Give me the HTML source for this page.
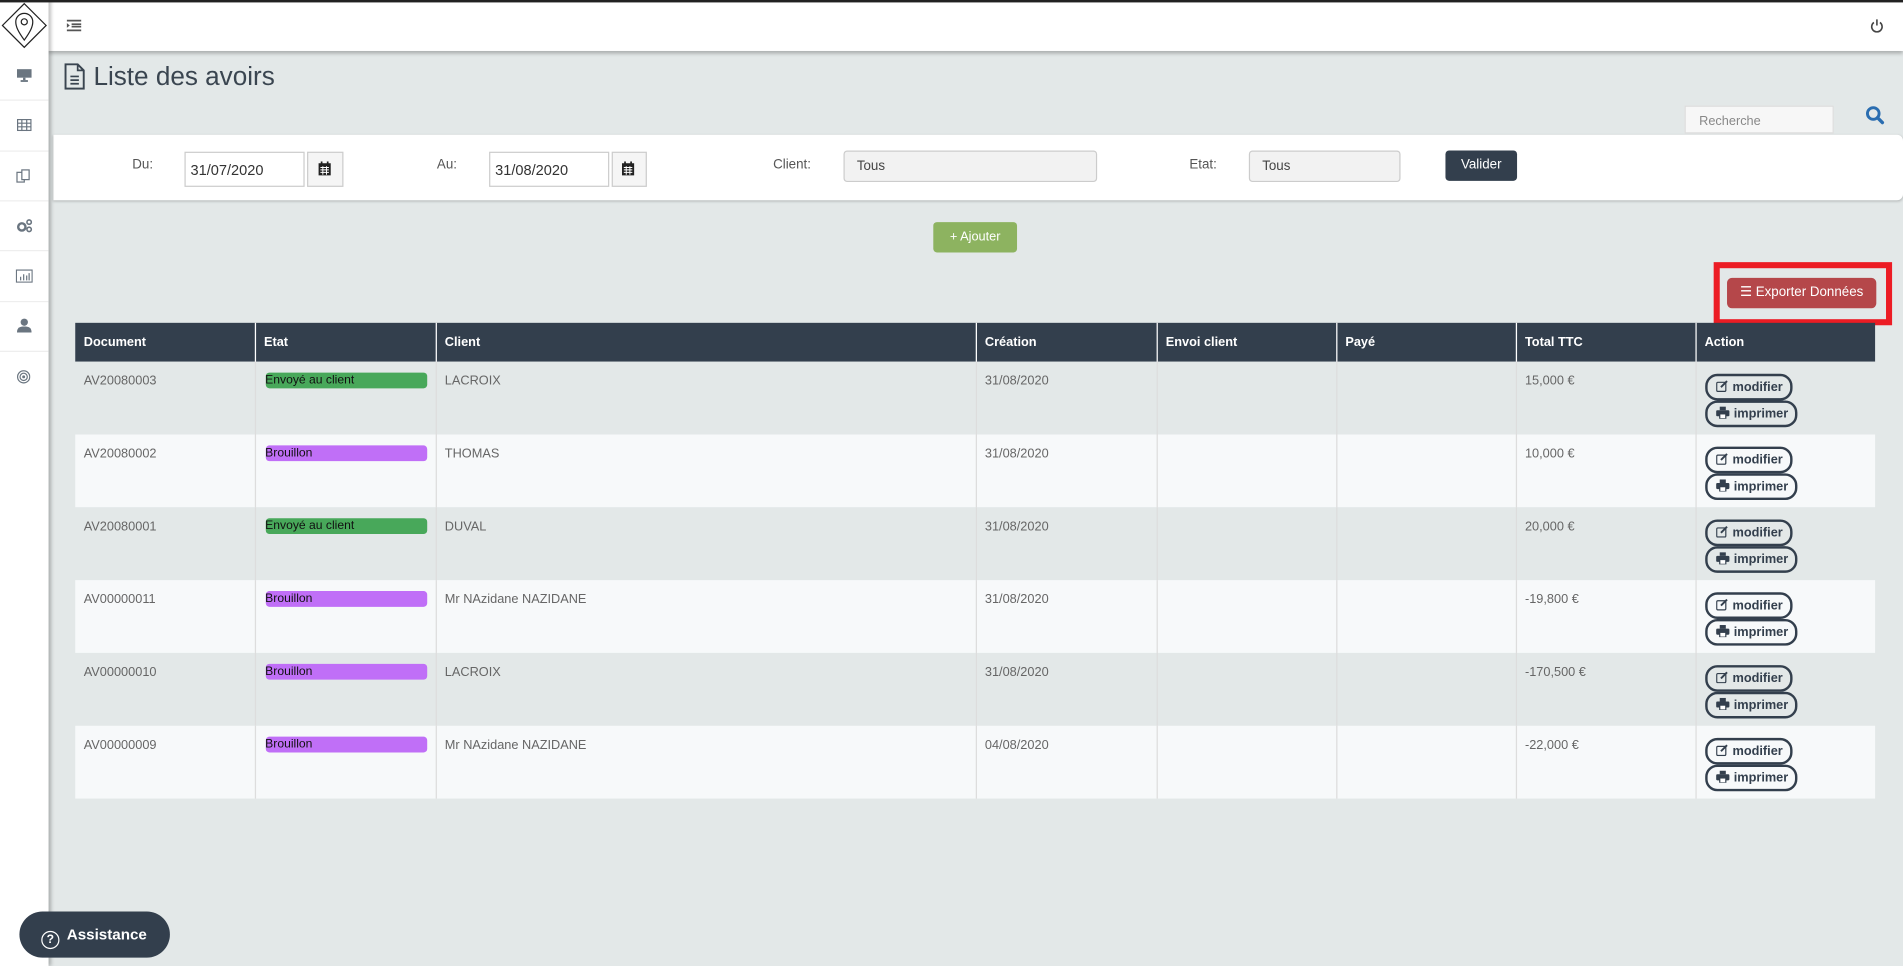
<!DOCTYPE html>
<html><head><meta charset="utf-8"><style>
html,body{margin:0;padding:0;width:1903px;height:966px;overflow:hidden;background:#e3e8e8}
#w{position:absolute;left:0;top:0;width:1568px;height:796px;transform:scale(1.21365);transform-origin:0 0;font-family:"Liberation Sans",sans-serif;color:#666;background:#e3e8e8}
.a{position:absolute}
.side{left:0;top:0;width:40px;height:796px;background:#fff;box-shadow:2px 0 3px rgba(0,0,0,.25);z-index:3}
.sep{left:0;width:40px;height:1px;background:#eee}
.hdr{left:40px;top:0;width:1528px;height:42px;background:#fff;box-shadow:0 2px 3px rgba(0,0,0,.25);z-index:2}
.inp{background:#fff;border:1px solid #ccc;font-size:12px;color:#333;box-sizing:border-box;padding:7px 0 0 4px}
.cal{background:#f5f5f5;border:1px solid #ccc;box-sizing:border-box}
.sel{background:#f2f2f2;border:1px solid #ccc;border-radius:3px;font-size:11px;color:#444;box-sizing:border-box;padding:6px 0 0 10px}
.lbl{font-size:11px;color:#555}
th{background:#333f4d;color:#fff;font-size:10.5px;text-align:left;padding:0 7px;height:31px;font-weight:bold;border-left:1px solid #fff}
th:first-child{border-left:none}
td{font-size:10.5px;color:#666;vertical-align:top;padding:10px 7px 0;height:50px;border-left:1px solid #ddd}
td:first-child{border-left:none}
tr.o td{background:#e3e8e8}tr.e td{background:#f7f9fa}
table{border-collapse:collapse;position:absolute;left:62px;top:266px;width:1483px;table-layout:fixed}
.bd{display:block;height:13px;border-radius:3px;color:#111;font-size:10px;line-height:13px;margin-top:-1px;width:133px;margin-left:1px}
.g{background:#48a85a}.p{background:#c06ff7}
.btn{display:inline-block;border:2px solid #333f4d;border-radius:10px;font-size:10.5px;font-weight:bold;color:#333f4d;height:18px;line-height:18px;padding:0 6px 0 7px}
.btn svg{vertical-align:-1px;margin-right:4px}
</style></head><body><div id="w">
<div class="a" style="left:0;top:0;width:1568px;height:2px;background:#222;z-index:5"></div>
<div class="a side">
 <svg class="a" style="left:0;top:0" width="40" height="42" viewBox="0 0 40 42"><path d="M20 3 L38 21 L20 39 L2 21 Z" fill="none" stroke="#222" stroke-width="1"/><path d="M20 33 C15 26 13 22 13 18 A7 7 0 0 1 27 18 C27 22 25 26 20 33Z" fill="none" stroke="#222" stroke-width="1"/><circle cx="20" cy="18" r="2.5" fill="none" stroke="#222"/></svg>
 <div class="a sep" style="top:82px"></div><div class="a sep" style="top:124px"></div><div class="a sep" style="top:165px"></div><div class="a sep" style="top:206px"></div><div class="a sep" style="top:248px"></div><div class="a sep" style="top:289px"></div>
 <svg class="a" style="left:13px;top:56px" width="14" height="12"><rect x="1" y="1" width="12" height="7" fill="#6a7580"/><rect x="6" y="8" width="2" height="2" fill="#6a7580"/><rect x="4" y="10" width="6" height="1.5" fill="#6a7580"/></svg>
 <svg class="a" style="left:14px;top:98px" width="12" height="10"><rect x=".5" y=".5" width="11" height="9" fill="none" stroke="#6a7580"/><path d="M0 3.5H12M0 6.5H12M4 0V10M8 0V10" stroke="#6a7580"/></svg>
 <svg class="a" style="left:13px;top:139px" width="13" height="13"><rect x="1" y="3" width="6" height="8" fill="none" stroke="#6a7580"/><rect x="5" y="1" width="6" height="8" fill="#fff" stroke="#6a7580"/></svg>
 <svg class="a" style="left:13px;top:180px" width="14" height="12"><circle cx="5" cy="7" r="3" fill="none" stroke="#6a7580" stroke-width="2"/><circle cx="11" cy="3" r="1.8" fill="none" stroke="#6a7580" stroke-width="1.3"/><circle cx="11" cy="9" r="1.8" fill="none" stroke="#6a7580" stroke-width="1.3"/></svg>
 <svg class="a" style="left:13px;top:222px" width="14" height="11"><rect x=".5" y=".5" width="13" height="10" fill="none" stroke="#6a7580"/><path d="M4 9V6M6.5 9V4M9 9V5M11 9V3" stroke="#6a7580"/></svg>
 <svg class="a" style="left:14px;top:262px" width="12" height="12"><circle cx="6" cy="3.5" r="3" fill="#6a7580"/><path d="M0 12C0 8 2 7 6 7S12 8 12 12Z" fill="#6a7580"/></svg>
 <svg class="a" style="left:14px;top:305px" width="11" height="11"><circle cx="5.5" cy="5.5" r="5" fill="none" stroke="#6a7580"/><circle cx="5.5" cy="5.5" r="3" fill="none" stroke="#6a7580"/><circle cx="5.5" cy="5.5" r="1.2" fill="#6a7580"/></svg>
</div>
<div class="a hdr">
 <svg class="a" style="left:15px;top:16px" width="12" height="10"><path d="M0 1H12M4 4H12M4 6H12M0 9H12" stroke="#555" stroke-width="1.4"/><path d="M0 3L2.5 5L0 7Z" fill="#555"/></svg>
 <svg class="a" style="left:1501px;top:15px" width="11" height="12"><path d="M3 3.5A4.3 4.3 0 1 0 8 3.5" fill="none" stroke="#444" stroke-width="1.3"/><path d="M5.5 1V6" stroke="#444" stroke-width="1.3"/></svg>
</div>
<svg class="a" style="left:53px;top:52px" width="17" height="22"><path d="M1 1H11L16 6V21H1Z" fill="none" stroke="#3a4550" stroke-width="1.6"/><path d="M11 1V6H16" fill="none" stroke="#3a4550" stroke-width="1.4"/><path d="M5 11H12M5 14H12M5 17H12" stroke="#3a4550" stroke-width="1.4"/></svg>
<div class="a" style="left:77px;top:51px;font-size:21.5px;color:#3a4550">Liste des avoirs</div>
<div class="a" style="left:1388px;top:87px;width:123px;height:23px;background:#f7f7f7;border:1px solid #ddd;box-sizing:border-box;font-size:10.5px;color:#888;padding:6px 0 0 11px">Recherche</div>
<svg class="a" style="left:1537px;top:87px" width="16" height="16"><circle cx="6.5" cy="6.5" r="4.8" fill="none" stroke="#2a6db0" stroke-width="2.4"/><path d="M10 10L14 14" stroke="#2a6db0" stroke-width="2.8" stroke-linecap="round"/></svg>
<div class="a" style="left:44px;top:111px;width:1524px;height:54px;background:#fff;border-radius:0 5px 5px 0;box-shadow:0 1px 2px rgba(0,0,0,.2)"></div>
<div class="a lbl" style="left:109px;top:130px">Du:</div>
<div class="a inp" style="left:152px;top:125px;width:99px;height:29px">31/07/2020</div>
<div class="a cal" style="left:253px;top:125px;width:30px;height:29px"></div>
<svg class="a" style="left:262px;top:133px" width="11" height="12"><rect x=".5" y="1.5" width="10" height="10" fill="#222"/><path d="M3 0V3M8 0V3" stroke="#222" stroke-width="1.4"/><path d="M2 5H9M2 7H9M2 9H9M4 4V11M7 4V11" stroke="#fff" stroke-width=".8"/></svg>
<div class="a lbl" style="left:360px;top:130px">Au:</div>
<div class="a inp" style="left:403px;top:125px;width:99px;height:29px">31/08/2020</div>
<div class="a cal" style="left:504px;top:125px;width:29px;height:29px"></div>
<svg class="a" style="left:512px;top:133px" width="11" height="12"><rect x=".5" y="1.5" width="10" height="10" fill="#222"/><path d="M3 0V3M8 0V3" stroke="#222" stroke-width="1.4"/><path d="M2 5H9M2 7H9M2 9H9M4 4V11M7 4V11" stroke="#fff" stroke-width=".8"/></svg>
<div class="a lbl" style="left:637px;top:130px">Client:</div>
<div class="a sel" style="left:695px;top:124px;width:209px;height:26px">Tous</div>
<div class="a lbl" style="left:980px;top:130px">Etat:</div>
<div class="a sel" style="left:1029px;top:124px;width:125px;height:26px">Tous</div>
<div class="a" style="left:1191px;top:124px;width:59px;height:25px;background:#333f4d;border-radius:3px;color:#fff;font-size:11px;text-align:center;line-height:25px">Valider</div>
<div class="a" style="left:769px;top:183px;width:69px;height:25px;background:#8db360;border-radius:3px;color:#fff;font-size:10.5px;text-align:center;line-height:25px">+ Ajouter</div>
<div class="a" style="left:1412px;top:216px;width:147px;height:52px;box-sizing:border-box;border:5px solid #ec1c24"></div>
<div class="a" style="left:1423px;top:229px;width:123px;height:25px;background:#b5474a;border-radius:4px;color:#fff;font-size:11px;line-height:25px;text-align:center">&#9776; Exporter Données</div>
<table>
<colgroup><col style="width:148px"><col style="width:149px"><col style="width:445px"><col style="width:149px"><col style="width:148px"><col style="width:148px"><col style="width:148px"><col style="width:148px"></colgroup>
<tr><th style="height:32px">Document</th><th>Etat</th><th>Client</th><th>Création</th><th>Envoi client</th><th>Payé</th><th>Total TTC</th><th>Action</th></tr>
<tr class="o"><td>AV20080003</td><td><span class="bd g">Envoyé au client</span></td><td>LACROIX</td><td>31/08/2020</td><td></td><td></td><td>15,000 €</td><td><span class="btn"><svg width="10" height="10"><rect x=".5" y="2" width="7.5" height="7.5" rx="1" fill="none" stroke="#333f4d"/><path d="M4 6L9 1" stroke="#333f4d" stroke-width="1.6"/></svg>modifier</span><br><span class="btn"><svg width="11" height="10"><rect x="3" y="0" width="5" height="3" fill="#333f4d"/><rect x="0" y="3" width="11" height="5" rx="1" fill="#333f4d"/><rect x="3" y="6" width="5" height="4" fill="#fff" stroke="#333f4d"/></svg>imprimer</span></td></tr>
<tr class="e"><td>AV20080002</td><td><span class="bd p">Brouillon</span></td><td>THOMAS</td><td>31/08/2020</td><td></td><td></td><td>10,000 €</td><td><span class="btn"><svg width="10" height="10"><rect x=".5" y="2" width="7.5" height="7.5" rx="1" fill="none" stroke="#333f4d"/><path d="M4 6L9 1" stroke="#333f4d" stroke-width="1.6"/></svg>modifier</span><br><span class="btn"><svg width="11" height="10"><rect x="3" y="0" width="5" height="3" fill="#333f4d"/><rect x="0" y="3" width="11" height="5" rx="1" fill="#333f4d"/><rect x="3" y="6" width="5" height="4" fill="#fff" stroke="#333f4d"/></svg>imprimer</span></td></tr>
<tr class="o"><td>AV20080001</td><td><span class="bd g">Envoyé au client</span></td><td>DUVAL</td><td>31/08/2020</td><td></td><td></td><td>20,000 €</td><td><span class="btn"><svg width="10" height="10"><rect x=".5" y="2" width="7.5" height="7.5" rx="1" fill="none" stroke="#333f4d"/><path d="M4 6L9 1" stroke="#333f4d" stroke-width="1.6"/></svg>modifier</span><br><span class="btn"><svg width="11" height="10"><rect x="3" y="0" width="5" height="3" fill="#333f4d"/><rect x="0" y="3" width="11" height="5" rx="1" fill="#333f4d"/><rect x="3" y="6" width="5" height="4" fill="#fff" stroke="#333f4d"/></svg>imprimer</span></td></tr>
<tr class="e"><td>AV00000011</td><td><span class="bd p">Brouillon</span></td><td>Mr NAzidane NAZIDANE</td><td>31/08/2020</td><td></td><td></td><td>-19,800 €</td><td><span class="btn"><svg width="10" height="10"><rect x=".5" y="2" width="7.5" height="7.5" rx="1" fill="none" stroke="#333f4d"/><path d="M4 6L9 1" stroke="#333f4d" stroke-width="1.6"/></svg>modifier</span><br><span class="btn"><svg width="11" height="10"><rect x="3" y="0" width="5" height="3" fill="#333f4d"/><rect x="0" y="3" width="11" height="5" rx="1" fill="#333f4d"/><rect x="3" y="6" width="5" height="4" fill="#fff" stroke="#333f4d"/></svg>imprimer</span></td></tr>
<tr class="o"><td>AV00000010</td><td><span class="bd p">Brouillon</span></td><td>LACROIX</td><td>31/08/2020</td><td></td><td></td><td>-170,500 €</td><td><span class="btn"><svg width="10" height="10"><rect x=".5" y="2" width="7.5" height="7.5" rx="1" fill="none" stroke="#333f4d"/><path d="M4 6L9 1" stroke="#333f4d" stroke-width="1.6"/></svg>modifier</span><br><span class="btn"><svg width="11" height="10"><rect x="3" y="0" width="5" height="3" fill="#333f4d"/><rect x="0" y="3" width="11" height="5" rx="1" fill="#333f4d"/><rect x="3" y="6" width="5" height="4" fill="#fff" stroke="#333f4d"/></svg>imprimer</span></td></tr>
<tr class="e"><td>AV00000009</td><td><span class="bd p">Brouillon</span></td><td>Mr NAzidane NAZIDANE</td><td>04/08/2020</td><td></td><td></td><td>-22,000 €</td><td><span class="btn"><svg width="10" height="10"><rect x=".5" y="2" width="7.5" height="7.5" rx="1" fill="none" stroke="#333f4d"/><path d="M4 6L9 1" stroke="#333f4d" stroke-width="1.6"/></svg>modifier</span><br><span class="btn"><svg width="11" height="10"><rect x="3" y="0" width="5" height="3" fill="#333f4d"/><rect x="0" y="3" width="11" height="5" rx="1" fill="#333f4d"/><rect x="3" y="6" width="5" height="4" fill="#fff" stroke="#333f4d"/></svg>imprimer</span></td></tr>
</table>
<div class="a" style="left:16px;top:751px;width:124px;height:38px;background:#333f4d;border-radius:19px;color:#fff;font-size:12.5px;font-weight:bold;line-height:38px;z-index:6"><span style="display:inline-block;width:13px;height:13px;border:1.5px solid #fff;border-radius:50%;text-align:center;line-height:13px;font-size:10px;margin:0 6px 0 18px;vertical-align:-3px">?</span>Assistance</div>
</div></body></html>
